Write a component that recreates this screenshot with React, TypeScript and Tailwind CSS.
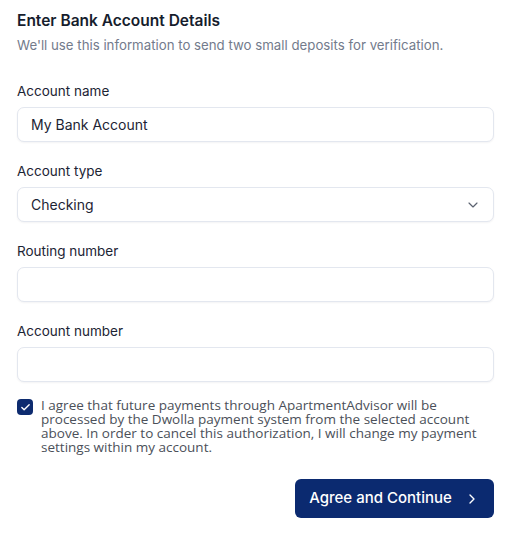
import { ChevronDown, ChevronRight, Check } from 'lucide-react'

function Field({ label, children }: { label: string; children: React.ReactNode }) {
  return (
    <div className="flex flex-col gap-[7px]">
      <label className="text-[13.5px] leading-[18px] text-[#1c2434]">{label}</label>
      {children}
    </div>
  )
}

function TextInput({ value = '' }: { value?: string }) {
  return (
    <input
      readOnly
      value={value}
      className="h-[35px] w-full rounded-[7px] border border-[#e3e7ef] bg-white px-[13px] text-[14px] text-[#1c2434] shadow-[0_1px_2px_rgba(16,24,40,0.05)] outline-none"
    />
  )
}

export default function App() {
  return (
    <div className="min-h-[534px] w-[510px] bg-white pl-[17px] pr-[16px] pt-[11px] font-['Inter',sans-serif]">
      <h2 className="text-[15.5px] font-semibold leading-[20px] text-[#161d2d]">Enter Bank Account Details</h2>
      <p className="mt-[5px] text-[13.25px] leading-[18px] text-[#737b8c]">
        We'll use this information to send two small deposits for verification.
      </p>

      <div className="mt-[28px] flex flex-col gap-[20px]">
        <Field label="Account name">
          <TextInput value="My Bank Account" />
        </Field>
        <Field label="Account type">
          <div className="flex h-[35px] w-full items-center justify-between rounded-[7px] border border-[#e3e7ef] bg-white pl-[13px] pr-[12px] text-[14px] text-[#1c2434] shadow-[0_1px_2px_rgba(16,24,40,0.05)]">
            <span>Checking</span>
            <ChevronDown className="h-4 w-4 text-[#5b6270]" strokeWidth={1.75} />
          </div>
        </Field>
        <Field label="Routing number">
          <TextInput />
        </Field>
        <Field label="Account number">
          <TextInput />
        </Field>
      </div>

      <div className="mt-[16px] flex gap-[8px]">
        <div className="mt-[1px] flex h-[16px] w-[16px] shrink-0 items-center justify-center rounded-[4px] bg-[#0d2b6f]">
          <Check className="h-[11px] w-[11px] text-white" strokeWidth={3} />
        </div>
        <p className="max-w-[440px] font-['Open_Sans',sans-serif] text-[13.5px] leading-[14px] text-[#4b5059]">
          I agree that future payments through ApartmentAdvisor will be processed by the Dwolla payment system from the
          selected account above. In order to cancel this authorization, I will change my payment settings within my
          account.
        </p>
      </div>

      <div className="mt-[25px] flex justify-end">
        <button className="flex h-[39px] w-[199px] items-center justify-center gap-[12px] rounded-[6px] bg-[#0b2a70] text-[15px] font-medium text-white">
          Agree and Continue
          <ChevronRight className="h-4 w-4" strokeWidth={2} />
        </button>
      </div>
    </div>
  )
}
